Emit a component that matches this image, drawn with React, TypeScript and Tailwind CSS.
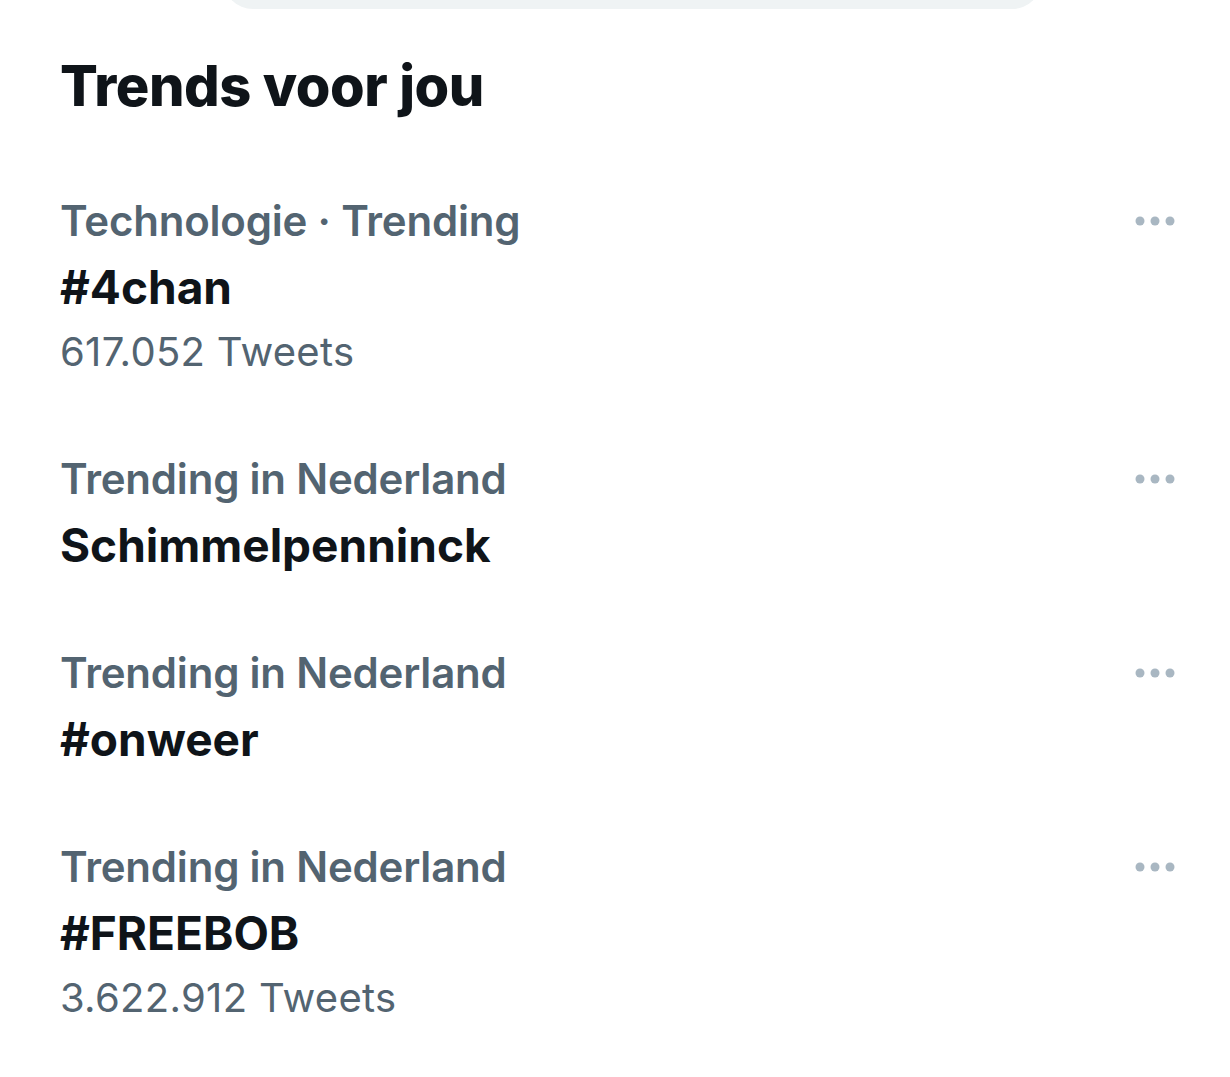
import React from 'react';

type Trend = {
  context: string;
  name: string;
  count?: string;
};

const trends: Trend[] = [
  { context: 'Technologie · Trending', name: '#4chan', count: '617.052 Tweets' },
  { context: 'Trending in Nederland', name: 'Schimmelpenninck' },
  { context: 'Trending in Nederland', name: '#onweer' },
  { context: 'Trending in Nederland', name: '#FREEBOB', count: '3.622.912 Tweets' },
];

const MoreIcon: React.FC = () => (
  <svg width="44" height="12" viewBox="0 0 44 12" className="text-[#a9b7c2]" fill="currentColor">
    <circle cx="6" cy="6" r="4.5" />
    <circle cx="21" cy="6" r="4.5" />
    <circle cx="36" cy="6" r="4.5" />
  </svg>
);

const TrendRow: React.FC<{ trend: Trend }> = ({ trend }) => (
  <div className="flex items-start justify-between py-[31px] pl-[60px] pr-[52px]">
    <div className="flex flex-col">
      <span className="text-[42px] leading-[66px] font-semibold text-[#536471] tracking-[-0.2px]">
        {trend.context}
      </span>
      <span className="text-[46px] leading-[66px] font-bold text-[#0f1419]">
        {trend.name}
      </span>
      {trend.count && (
        <span className="text-[40px] leading-[64px] font-normal text-[#536471] tracking-[0.3px]">
          {trend.count}
        </span>
      )}
    </div>
    <div className="pt-[27px]">
      <MoreIcon />
    </div>
  </div>
);

const App: React.FC = () => {
  return (
    <div className="min-h-screen w-[1230px] bg-white font-['Inter',sans-serif] overflow-hidden">
      <div className="ml-[223px] -mt-[51px] h-[60px] w-[819px] rounded-full bg-[#eff3f4]" />

      <h2 className="mt-[45px] pl-[60px] text-[56px] leading-[64px] font-extrabold text-[#0f1419] tracking-[-0.45px]">
        Trends voor jou
      </h2>

      <div className="mt-[39px] flex flex-col">
        {trends.map((trend, i) => (
          <TrendRow key={i} trend={trend} />
        ))}
      </div>
    </div>
  );
};

export default App;
